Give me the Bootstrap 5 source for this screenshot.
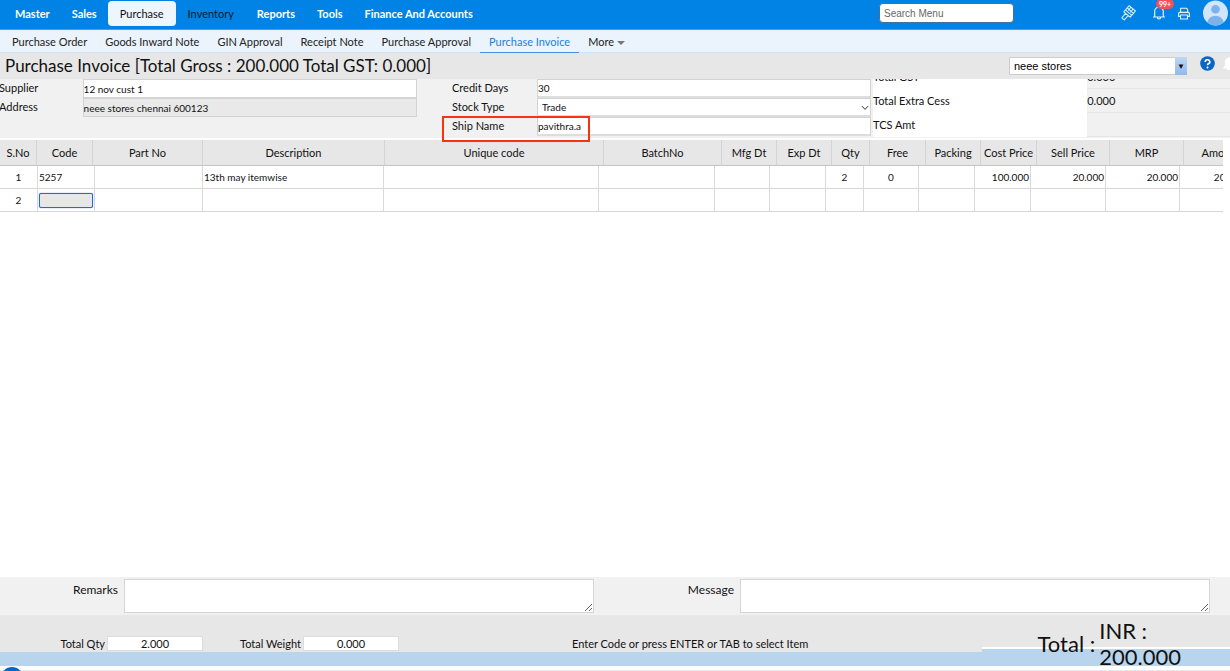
<!DOCTYPE html>
<html lang="en">
<head>
<meta charset="utf-8">
<meta name="viewport" content="width=device-width, initial-scale=1">
<title>Purchase Invoice</title>
<link href="https://cdn.jsdelivr.net/npm/bootstrap@5.3.0/dist/css/bootstrap.min.css" rel="stylesheet">
<style>
  body { font-family: Lato, "Liberation Sans", sans-serif; font-size: 11px; line-height: 16px; color: #111; background: #fff; }
  .page-shell { overflow: hidden; }
  .ui-arial { font-family: "Liberation Sans", Arial, sans-serif; }

  .topbar { height: 29px; background: #0083e5; padding-left: 4px; }
  .topbar .nav-link { padding: 5px 11px; height: 25px; margin-top: 1px; color: #fff; font-weight: 700; border-radius: 4px; line-height: 16px; white-space: nowrap; }
  .topbar .nav-link.active { padding: 5px 12px; background: #edf5fd; color: #111; font-weight: 400; }
  .topbar .nav-link.visited-item { padding: 5px 12px; color: #0b1a2b; font-weight: 400; }
  .search-box { width: 135px; height: 20px; margin-top: 3px; margin-right: 107px; padding: 0 4px; font-size: 10px; border: 1px solid #4b6f93; border-radius: 4px; background: #fff; }
  .search-box::placeholder { color: #666; opacity: 1; }
  .icon-btn { padding: 0; border: 0; background: none; line-height: 0; color: #fff; }
  .count-badge { top: -1px; left: 4px; padding: 0 3px; border-radius: 6px; background: #f4505a; color: #fff; font-size: 7px; line-height: 10px; font-weight: 700; }

  .subnav { height: 24px; background: #ebf4fc; border-top: 1px solid #4a9ce9; border-bottom: 1px solid #d3e4f0; padding-left: 3px; }
  .subnav .nav-link { padding: 4px 9px 3px; height: 24px; color: #222; line-height: 15px; white-space: nowrap; }
  .subnav .nav-link.active { color: #1a7fe0; border-bottom: 2px solid #4a90dc; }
  .more-caret { display: inline-block; border: 4px solid transparent; border-top-color: #777; border-bottom: 0; vertical-align: 1px; }

  .titlebar { height: 26px; background: #e7e7e7; padding-left: 5px; }
  .titlebar h1 { font-size: 17px; line-height: 26px; font-weight: 400; margin: 0; white-space: nowrap; }
  .store-input { width: 166px; height: 18px; border: 1px solid #ccc; border-right: 0; padding: 0 4px; font-size: 11px; background: #fff; }
  .store-btn { width: 12px; height: 18px; padding: 0; border: 0; background: linear-gradient(#bdd8f5, #8fb9ea); font-size: 8px; line-height: 18px; color: #111; }
  .help-btn { margin: 0 8px 0 13px; }

  .form-grid { display: grid; grid-template-columns: 417fr 35fr 419fr 359fr; height: 59px; background: #f1f1f1; }
  .form-line { display: grid; grid-template-columns: 20% 80%; height: 19px; }
  .form-line > label { line-height: 18px; white-space: nowrap; }
  .left-fields { margin-left: -1px; }
  .field { width: 100%; min-width: 0; height: 19px; padding: 0; border: 1px solid #d3d3d3; border-radius: 0; background: #fff; color: #111; font-size: 10px; }
  .field[readonly] { background: #e9e9e9; }
  select.field { appearance: none; }
  .select-arrow { right: 2px; top: 7px; }
  .form-mid .form-line { grid-template-columns: 85px 1fr; }
  .form-mid .field { border-bottom: 2px solid #ddd; }
  .form-mid select.field { padding-left: 4px; }
  .highlight-frame { left: -10px; top: -1px; width: 148px; height: 26px; border: 2px solid #f53410; pointer-events: none; }
  .totals-clip { overflow: hidden; padding-left: 2px; }
  .totals-list { margin: -14px 0 0; }
  .totals-list > div { display: grid; grid-template-columns: 60% 40%; height: 24px; border-bottom: 1px solid #e6e6e6; }
  .totals-list dt { background: #fff; font-weight: 400; line-height: 24px; }
  .totals-list dd { margin: 0; line-height: 24px; }

  .grid-area { margin-top: 2px; margin-right: 7px; overflow: hidden; }
  .grid-area table { table-layout: fixed; width: 1253px; border-collapse: separate; border-spacing: 0; }
  .grid-area .head-table { width: 1259px; }
  .grid-area th { height: 26px; padding: 0; font-weight: 400; text-align: center; background: #e7e7e7; border-right: 1px solid #d4d4d4; border-bottom: 1px solid #c4c4c4; white-space: nowrap; }
  .grid-area td { height: 23px; padding: 0 1px; font-size: 10px; border-right: 1px solid #d9d9d9; border-bottom: 1px solid #d6d6d6; white-space: nowrap; }
  .code-input { display: block; width: 54px; height: 15px; border: 1px solid #1a6fd0; border-radius: 2px; box-shadow: 0 0 1px #1a6fd0; background: #e7e7e7; padding: 0; }

  .notes { height: 38px; background: #f1f1f1; padding: 2px 20px 0 0; display: grid; grid-template-columns: 594fr 616fr; }
  .notes label { width: 118px; margin-right: 6px; text-align: right; font-size: 12px; line-height: 22px; }
  .notes .notes-second label { width: 140px; }
  .notes textarea { height: 34px; border: 1px solid #d5d5d5; background: #fff; padding: 2px; }
  .summary { height: 37px; background: #e7e7e7; }
  .summary .sum-part { padding-top: 21px; white-space: nowrap; }
  .sum-first { width: 203px; }
  .sum-second { width: 196px; }
  .sum-hint { margin-left: 173px; }
  .sum-input { width: 96px; height: 15px; border: 1px solid #ddd; text-align: center; font-size: 11px; padding: 0; margin-left: 2px; background: #fff; color: #111; }
  .strip { height: 14px; background: #b9d5ed; }
  .strip-raised { right: 0; bottom: 0; width: 248px; height: 5px; background: #b9d5ed; border-top: 2px solid #fff; }
  .grand-total { right: 49px; top: 3px; font-size: 22px; line-height: 26px; z-index: 2; }
  .page-foot { height: 5px; border-bottom: 1px solid #e8e8e8; }
  .foot-bubble { left: 1px; top: 1px; width: 22px; height: 22px; border-radius: 50%; background: #0a66c2; }
</style>
</head>
<body>
<div class="page-shell d-flex flex-column vh-100">
  <header class="topbar d-flex align-items-start">
    <nav class="nav flex-nowrap me-auto" aria-label="Main">
      <a class="nav-link" href="#">Master</a>
      <a class="nav-link" href="#">Sales</a>
      <a class="nav-link active" href="#">Purchase</a>
      <a class="nav-link visited-item" href="#">Inventory</a>
      <a class="nav-link" href="#">Reports</a>
      <a class="nav-link" href="#">Tools</a>
      <a class="nav-link" href="#">Finance And Accounts</a>
    </nav>
    <input class="search-box ui-arial" type="search" placeholder="Search Menu" aria-label="Search Menu">
    <div class="d-flex align-items-center">
      <button class="icon-btn me-3" type="button" aria-label="Theme">
        <svg width="15" height="26" viewBox="0 0 15 26" fill="none" stroke="#d9ecff" stroke-width="1.1" stroke-linejoin="round" stroke-linecap="round"><path d="M8.2 5.6 14.4 11 9.2 17.2 2.8 11.8zM4.4 9.9 10.8 15.4M4.6 13.4.8 17.8 3.2 19.8 7.2 15.6M10 7.2 7.4 10.2M12 9 9.6 12M6.2 7.9 12.6 13.3"/></svg>
      </button>
      <button class="icon-btn position-relative me-2" type="button" aria-label="Notifications">
        <svg width="14" height="26" viewBox="0 0 14 26" fill="none" stroke="#e4f1ff" stroke-width="1.2" stroke-linejoin="round"><path d="M1 17h12M2.7 17V11.5A4.3 4.3 0 0 1 11.3 11.5V17M5.3 17.3a1.7 1.7 0 0 0 3.4 0M7 7V5.6"/></svg>
        <span class="count-badge position-absolute">99+</span>
      </button>
      <button class="icon-btn ms-1 me-2 pe-1" type="button" aria-label="Print">
        <svg width="13" height="26" viewBox="0 0 13 26" fill="none" stroke="#e4f1ff" stroke-width="1.1" stroke-linejoin="round"><path d="M2.6 12.6V8.2H8.4L9.6 9.4V12.6M2.4 16.4H.6V13.6Q.6 12.4 1.8 12.4H10.2Q11.4 12.4 11.4 13.6V16.4H9.6M2.5 15H9.5V19H2.5z"/></svg>
      </button>
      <button class="icon-btn" type="button" aria-label="Account">
        <svg width="27" height="26" viewBox="0 0 27 26"><defs><clipPath id="face"><circle cx="12.5" cy="13" r="12.5"/></clipPath></defs><g clip-path="url(#face)"><path fill="#d2e6fb" d="M0 0h25v26H0z"/><circle cx="12.5" cy="9.3" r="4.3" fill="#7fb2ea"/><ellipse cx="12.5" cy="22.5" rx="8" ry="6.8" fill="#7fb2ea"/></g></svg>
      </button>
    </div>
  </header>

  <nav class="subnav nav flex-nowrap" aria-label="Purchase">
    <a class="nav-link" href="#">Purchase Order</a>
    <a class="nav-link" href="#">Goods Inward Note</a>
    <a class="nav-link" href="#">GIN Approval</a>
    <a class="nav-link" href="#">Receipt Note</a>
    <a class="nav-link" href="#">Purchase Approval</a>
    <a class="nav-link active" href="#">Purchase Invoice</a>
    <a class="nav-link" href="#">More <span class="more-caret"></span></a>
  </nav>

  <div class="titlebar d-flex align-items-center">
    <h1 class="me-auto">Purchase Invoice [Total Gross : 200.000 Total GST: 0.000]</h1>
    <input class="store-input ui-arial" type="text" value="neee stores" aria-label="Store">
    <button class="store-btn" type="button" aria-label="Choose store">▼</button>
    <button class="icon-btn help-btn" type="button" aria-label="Help">
      <svg width="15" height="20" viewBox="0 0 15 20"><circle cx="7.5" cy="7.5" r="7.3" fill="#0b66c3"/><path d="M5.2 6A2.3 2.1 0 1 1 8.4 7.8Q7.5 8.2 7.5 9.2" fill="none" stroke="#fff" stroke-width="1.6"/><circle cx="7.5" cy="11.4" r="1" fill="#fff"/></svg>
    </button>
    <svg width="7" height="20" viewBox="0 0 7 20"><path d="M0 12 2 9.5V6Q2 2 6 1.6L7 1.5V14H4V12.6H0z" fill="#fff"/></svg>
  </div>

  <section class="form-grid">
    <div class="left-fields">
      <div class="form-line"><label for="supplier">Supplier</label><input class="field" id="supplier" type="text" value="12 nov cust 1"></div>
      <div class="form-line"><label for="address">Address</label><input class="field" id="address" type="text" value="neee stores chennai 600123" readonly></div>
    </div>
    <div></div>
    <div class="form-mid">
      <div class="form-line"><label for="credit">Credit Days</label><input class="field" id="credit" type="text" value="30"></div>
      <div class="form-line"><label for="stock">Stock Type</label>
        <div class="position-relative"><select class="field d-block" id="stock"><option>Trade</option></select>
          <svg class="select-arrow position-absolute" width="8" height="6" viewBox="0 0 8 6" fill="none" stroke="#333"><path d="M1 1.2 4 4.4 7 1.2"/></svg></div></div>
      <div class="form-line position-relative"><label for="ship">Ship Name</label><input class="field" id="ship" type="text" value="pavithra.a"><span class="highlight-frame position-absolute"></span></div>
    </div>
    <div class="totals-clip">
      <dl class="totals-list">
        <div><dt>Total GST</dt><dd>0.000</dd></div>
        <div><dt>Total Extra Cess</dt><dd>0.000</dd></div>
        <div><dt>TCS Amt</dt><dd></dd></div>
      </dl>
    </div>
  </section>

  <main class="grid-area flex-grow-1">
    <table class="head-table">
      <colgroup><col style="width:37px"><col style="width:56px"><col style="width:110px"><col style="width:182px"><col style="width:219px"><col style="width:118px"><col style="width:55px"><col style="width:55px"><col style="width:38px"><col style="width:56px"><col style="width:55px"><col style="width:56px"><col style="width:73px"><col style="width:74px"><col></colgroup>
      <thead><tr><th>S.No</th><th>Code</th><th>Part No</th><th>Description</th><th>Unique code</th><th>BatchNo</th><th>Mfg Dt</th><th>Exp Dt</th><th>Qty</th><th>Free</th><th>Packing</th><th>Cost Price</th><th>Sell Price</th><th>MRP</th><th>Amount</th></tr></thead>
    </table>
    <table aria-label="Invoice items">
      <colgroup><col style="width:38px"><col style="width:57px"><col style="width:108px"><col style="width:181px"><col style="width:215px"><col style="width:116px"><col style="width:55px"><col style="width:56px"><col style="width:38px"><col style="width:55px"><col style="width:56px"><col style="width:56px"><col style="width:75px"><col style="width:74px"><col></colgroup>
      <tbody>
        <tr><td class="text-center">1</td><td>5257</td><td></td><td>13th may itemwise</td><td></td><td></td><td></td><td></td><td class="text-center">2</td><td class="text-center">0</td><td></td><td class="text-end">100.000</td><td class="text-end">20.000</td><td class="text-end">20.000</td><td class="text-end">200.000</td></tr>
        <tr><td class="text-center">2</td><td><input class="code-input" type="text" aria-label="Item code"></td><td></td><td></td><td></td><td></td><td></td><td></td><td></td><td></td><td></td><td></td><td></td><td></td><td></td></tr>
      </tbody>
    </table>
  </main>

  <section class="notes">
    <div class="d-flex"><label for="remarks">Remarks</label><textarea class="flex-grow-1" id="remarks"></textarea></div>
    <div class="notes-second d-flex"><label for="message">Message</label><textarea class="flex-grow-1" id="message"></textarea></div>
  </section>

  <footer>
    <div class="summary position-relative d-flex">
      <div class="sum-part sum-first d-flex justify-content-end"><label for="tqty">Total Qty</label><input class="sum-input" id="tqty" type="text" value="2.000"></div>
      <div class="sum-part sum-second d-flex justify-content-end"><label for="tweight">Total Weight</label><input class="sum-input" id="tweight" type="text" value="0.000"></div>
      <div class="sum-part sum-hint">Enter Code or press ENTER or TAB to select Item</div>
      <div class="strip-raised position-absolute"></div>
      <div class="grand-total position-absolute d-flex align-items-center"><span class="me-1">Total :</span><span>INR :<br>200.000</span></div>
    </div>
    <div class="strip"></div>
    <div class="page-foot position-relative"><span class="foot-bubble position-absolute"></span></div>
  </footer>
</div>
<script src="https://cdn.jsdelivr.net/npm/bootstrap@5.3.0/dist/js/bootstrap.bundle.min.js"></script>
</body>
</html>
